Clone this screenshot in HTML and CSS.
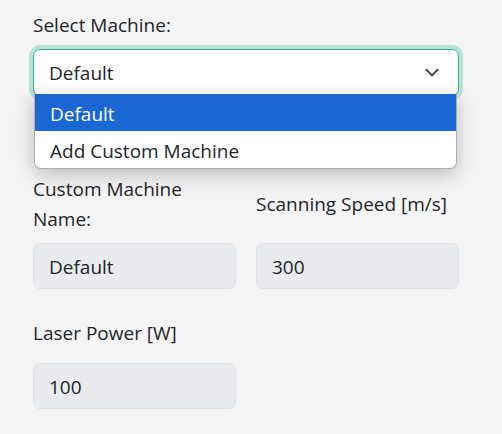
FILE: index.html
```html
<!DOCTYPE html>
<html lang="en">
<head>
<meta charset="utf-8">
<title>Machine Settings</title>
<link rel="stylesheet" href="styles.css">
</head>
<body>
<main class="page">
  <div class="select-group">
    <div class="field-label">Select Machine:</div>
    <div class="select">
      <span>Default</span>
      <svg class="chevron" width="20" height="15" viewBox="0 0 16 16"><path d="m2 5 6 6 6-6" fill="none" stroke="#343a40" stroke-width="2" stroke-linecap="round" stroke-linejoin="round"/></svg>
      <ul class="dropdown">
        <li class="option selected">Default</li>
        <li class="option">Add Custom Machine</li>
      </ul>
    </div>
  </div>
  <div class="grid">
    <div class="field-label grid-label">Custom Machine Name:</div>
    <div class="field-label grid-label">Scanning Speed [m/s]</div>
    <div class="input">Default</div>
    <div class="input">300</div>
  </div>
  <div class="power">
    <div class="field-label power-label">Laser Power [W]</div>
    <div class="input">100</div>
  </div>
</main>
</body>
</html>
```

FILE: styles.css
```css
* { box-sizing: border-box; }

html, body {
  margin: 0;
  background: #f4f4f4;
}

body {
  font-family: "Segoe UI", "Open Sans", sans-serif;
  font-size: 19px;
  color: #212529;
  line-height: 30px;
}

.page {
  width: 426px;
  margin-left: 33px;
  padding-top: 10px;
}

.field-label {
  line-height: 30px;
  margin-bottom: 9px;
}

.select-group {
  margin-bottom: 78px;
}

.select {
  position: relative;
  height: 47px;
  padding: 1px 15px 0;
  display: flex;
  align-items: center;
  justify-content: space-between;
  background: #fff;
  border: 1px solid #3cae96;
  border-radius: 7px;
  box-shadow: 0 0 0 4px #b8e2d8;
}

.chevron {
  display: block;
  margin-right: 1px;
  margin-top: -1px;
}

.dropdown {
  position: absolute;
  left: 0;
  right: 1px;
  top: calc(100% - 1px);
  margin: 0;
  padding: 0;
  list-style: none;
  background: #fff;
  border: 1px solid #b0b0b0;
  border-top: 0;
  border-radius: 0 0 7px 7px;
  box-shadow: 0 5px 20px rgba(0, 0, 0, 0.24);
  overflow: hidden;
}

.option {
  height: 37px;
  padding: 4.5px 15px 2.5px;
  line-height: 30px;
}

.option.selected {
  background: #1a66d2;
  color: #fff;
}

.grid {
  display: grid;
  grid-template-columns: 203px 203px;
  column-gap: 20px;
  margin-bottom: 29px;
}

.grid-label {
  align-self: center;
}

.input {
  height: 46px;
  padding: 1px 15px 0;
  display: flex;
  align-items: center;
  background: #e9ecef;
  border: 1px solid #dee2e6;
  border-radius: 7px;
}

.power {
  width: 203px;
}

.power-label {
  margin-bottom: 15px;
}
```
